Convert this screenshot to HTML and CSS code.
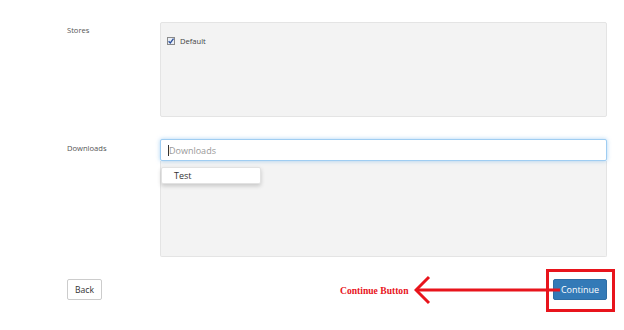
FILE: index.html
```html
<!DOCTYPE html>
<html lang="en">

<head>
    <meta charset="UTF-8">
    <meta name="viewport" content="width=device-width, initial-scale=1.0">
    <title>Product Form</title>
    <link rel="stylesheet" href="styles.css">
</head>

<body>
    <div class="form">
        <div class="row">
            <label class="label">Stores</label>
            <div class="well stores">
                <div class="check">
                    <span class="box">
                        <svg width="8" height="8" viewBox="0 0 8 8"><path d="M1.6 4.2 L3.3 6 L6.5 1.6" fill="none" stroke="#2b4f9a" stroke-width="1.3"/></svg>
                    </span>
                    <span>Default</span>
                </div>
            </div>
        </div>

        <div class="row downloads-row">
            <label class="label">Downloads</label>
            <div class="field">
                <div class="input"><span class="caret"></span><span class="placeholder">Downloads</span></div>
                <div class="well list"></div>
                <div class="dropdown">Test</div>
            </div>
        </div>

        <div class="actions">
            <button class="btn">Back</button>
            <div class="target">
                <button class="btn primary">Continue</button>
                <span class="frame"></span>
            </div>
        </div>
    </div>

    <div class="note">
        <span class="note-text">Continue Button</span>
        <svg class="arrow" width="150" height="30" viewBox="0 0 150 30">
            <path d="M2 15 H146" stroke="#e8141c" stroke-width="3" fill="none"/>
            <path d="M15 2 L2 15 L15 28" stroke="#e8141c" stroke-width="3" fill="none"/>
        </svg>
    </div>
</body>

</html>
```

FILE: styles.css
```css
* {
    margin: 0;
    padding: 0;
    box-sizing: border-box;
}

html,
body {
    width: 100%;
    height: 100%;
    background: #fff;
}

body {
    position: relative;
    font-family: "Open Sans", "Noto Sans", sans-serif;
    color: #555;
}

.form {
    padding: 22px 17px 0 67px;
}

.row {
    display: grid;
    grid-template-columns: 93px 1fr;
    margin-bottom: 22px;
}

.label {
    font-size: 7.6px;
    color: #555;
    padding-top: 3px;
}

.downloads-row .label {
    padding-top: 4px;
}

.well {
    background: #f3f3f3;
    border: 1px solid #e4e4e4;
    border-radius: 2px;
}

.stores {
    height: 95px;
    padding: 13px 6px;
}

.check {
    display: flex;
    align-items: center;
    gap: 5px;
    font-size: 7.6px;
    color: #444;
}

.check .box {
    width: 8px;
    height: 8px;
    border: 1px solid #8a8a8a;
    background: #e9eef6;
    display: flex;
    align-items: center;
    justify-content: center;
}

.check .box svg {
    flex: none;
}

.field {
    position: relative;
}

.input {
    position: relative;
    z-index: 1;
    height: 22px;
    background: #fff;
    border: 1px solid #9fcdf2;
    border-radius: 2px;
    box-shadow: 0 0 4px rgba(102, 175, 233, 0.55);
    display: flex;
    align-items: center;
    padding-left: 7px;
    font-size: 9px;
}

.caret {
    width: 1px;
    height: 11px;
    background: #333;
}

.placeholder {
    color: #999;
}

.list {
    height: 96px;
    border-top: none;
    border-radius: 0 0 2px 2px;
}

.dropdown {
    position: absolute;
    z-index: 2;
    top: 28px;
    left: 1px;
    width: 100px;
    height: 17px;
    background: #fff;
    border: 1px solid #e2e2e2;
    border-radius: 2px;
    box-shadow: 0 2px 4px rgba(0, 0, 0, 0.18);
    font-size: 9px;
    color: #333;
    padding-left: 12px;
    line-height: 15px;
}

.actions {
    display: flex;
    justify-content: space-between;
    align-items: center;
}

.btn {
    height: 21px;
    padding: 0 7px;
    border: 1px solid #ccc;
    border-radius: 2px;
    background: #fff;
    font-family: "Open Sans", "Noto Sans", sans-serif;
    font-size: 8.6px;
    color: #333;
}

.btn.primary {
    width: 54px;
    padding: 0;
    border-color: #2e6da4;
    background: #337ab7;
    color: #fff;
    font-size: 9px;
}

.target {
    position: relative;
    display: flex;
}

.frame {
    position: absolute;
    top: -10px;
    left: -7px;
    right: -8px;
    bottom: -12px;
    border: 3px solid #e8141c;
}

.note {
    position: absolute;
    top: 275px;
    left: 340px;
    display: flex;
    align-items: center;
}

.note-text {
    font-family: "Liberation Serif", serif;
    font-weight: bold;
    font-size: 9.6px;
    color: #e8141c;
    width: 74px;
}

.arrow {
    margin-left: 0;
}
```
